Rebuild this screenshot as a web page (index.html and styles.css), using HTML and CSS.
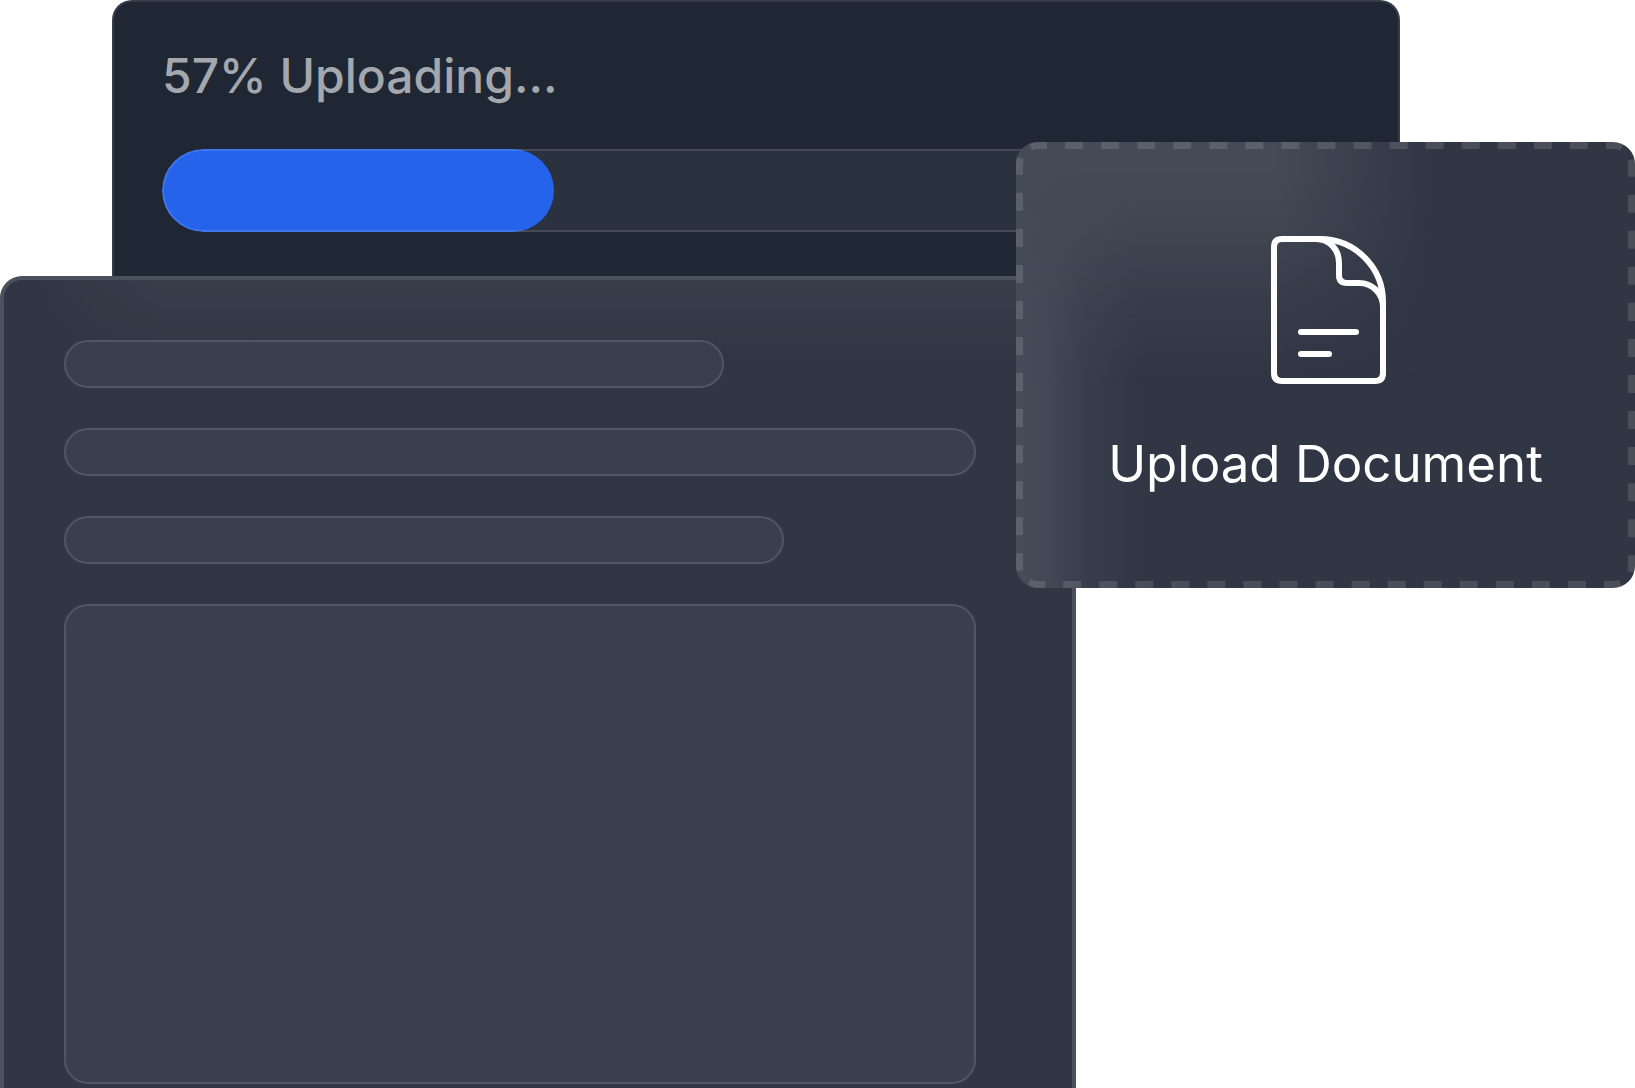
FILE: index.html
```html
<!DOCTYPE html>
<html lang="en">
<head>
  <meta charset="utf-8">
  <meta name="viewport" content="width=device-width, initial-scale=1">
  <title>Upload Document</title>
  <link rel="stylesheet" href="styles.css">
</head>
<body>
  <main class="stage">
    <section class="status">
      <p class="status-label" id="status-label">57% Uploading...</p>
      <div class="track" role="progressbar" aria-labelledby="status-label" aria-valuemin="0" aria-valuemax="100" aria-valuenow="57">
        <div class="track-fill"></div>
      </div>
    </section>

    <section class="document" aria-hidden="true">
      <div class="line line-short"></div>
      <div class="line"></div>
      <div class="line line-medium"></div>
      <div class="block"></div>
    </section>

    <button class="upload" type="button">
      <svg class="upload-outline" aria-hidden="true">
        <rect width="100%" height="100%" rx="22" pathLength="2088"/>
      </svg>
      <svg class="upload-icon" viewBox="0 0 116 148" aria-hidden="true">
        <path d="M49 3H11Q3 3 3 11V137Q3 145 11 145H104Q112 145 112 137V66A63 63 0 0 0 49 3"/>
        <path d="M45 3C59 3 68 14 68 27V39Q68 47 76 47H88C101 47 112 57 112 71"/>
        <path d="M30 96H85M30 118H58"/>
      </svg>
      <span class="upload-label">Upload Document</span>
    </button>
  </main>
</body>
</html>
```
FILE: styles.css
```css
* {
  box-sizing: border-box;
}

body {
  margin: 0;
  background: #fff;
  font-family: Inter, "Liberation Sans", sans-serif;
}

.stage {
  position: relative;
  display: flex;
  flex-direction: column;
  min-height: 100vh;
}

/* Progress card at the back */
.status {
  margin: 0 235px 0 112px;
  padding: 44px 48px 44px;
  border: 2px solid #363d49;
  border-bottom: 0;
  border-radius: 20px 20px 0 0;
  background: #202734;
}

.status-label {
  margin: 0 0 43px;
  font-size: 48px;
  font-weight: 500;
  line-height: 60px;
  color: #a4a7ad;
}

.track {
  position: relative;
  height: 83px;
  border-radius: 42px;
  background: #2b323f;
  overflow: hidden;
}

.track-fill {
  width: 33%;
  height: 100%;
  border-radius: 42px;
  background: #2563eb;
}

.track::after {
  content: "";
  position: absolute;
  inset: 0;
  border: 2px solid rgba(255, 255, 255, 0.12);
  border-radius: 42px;
}

/* Document skeleton */
.document {
  display: flex;
  flex: 1;
  flex-direction: column;
  gap: 40px;
  position: relative;
  margin-right: 559px;
  padding: 60px 96px 4px 60px;
  border: 4px solid #4a505c;
  border-bottom: 0;
  border-radius: 22px 22px 0 0;
  background: #303643;
}

.document::before {
  content: "";
  position: absolute;
  inset: 0 0 auto;
  height: 90px;
  border-radius: 18px 18px 0 0;
  background: linear-gradient(rgba(255, 255, 255, 0.04), transparent);
  mask-image: linear-gradient(90deg, transparent 20px, #000 160px);
}

.line,
.block {
  position: relative;
  border: 2px solid #505662;
  border-radius: 24px;
  background: #393f4c;
}

.line {
  height: 48px;
}

.line-short {
  margin-right: 252px;
}

.line-medium {
  margin-right: 192px;
}

.block {
  height: 480px;
}

/* Floating drop target */
.upload {
  position: absolute;
  top: 142px;
  right: 0;
  display: flex;
  flex-direction: column;
  align-items: center;
  gap: 50px;
  width: 619px;
  padding: 94px 0;
  border: 0;
  border-radius: 22px;
  background:
    linear-gradient(90deg, #474c59, rgba(71, 76, 89, 0.85) 30px, rgba(71, 76, 89, 0.35) 70px, rgba(71, 76, 89, 0) 125px),
    #303643;
  color: #fff;
  font: inherit;
  overflow: hidden;
  cursor: pointer;
}

.upload::before {
  content: "";
  position: absolute;
  inset: 0;
  background: linear-gradient(#454a56 30px, rgba(69, 74, 86, 0.8) 90px, rgba(69, 74, 86, 0.35) 155px, rgba(69, 74, 86, 0) 240px);
  mask-image: linear-gradient(90deg, #000 260px, rgba(0, 0, 0, 0.5) 340px, transparent 420px);
}

.upload-outline {
  position: absolute;
  inset: 0;
  width: 100%;
  height: 100%;
  fill: none;
  stroke: rgba(255, 255, 255, 0.12);
  stroke-width: 14px;
  stroke-dasharray: 18 18;
  stroke-dashoffset: 9px;
}

.upload-icon {
  position: relative;
  width: 116px;
  height: 148px;
  margin-left: 6px;
  fill: none;
  stroke: #fff;
  stroke-width: 6px;
  stroke-linecap: round;
  stroke-linejoin: round;
}

.upload-label {
  position: relative;
  font-size: 51px;
  line-height: 60px;
}
```
